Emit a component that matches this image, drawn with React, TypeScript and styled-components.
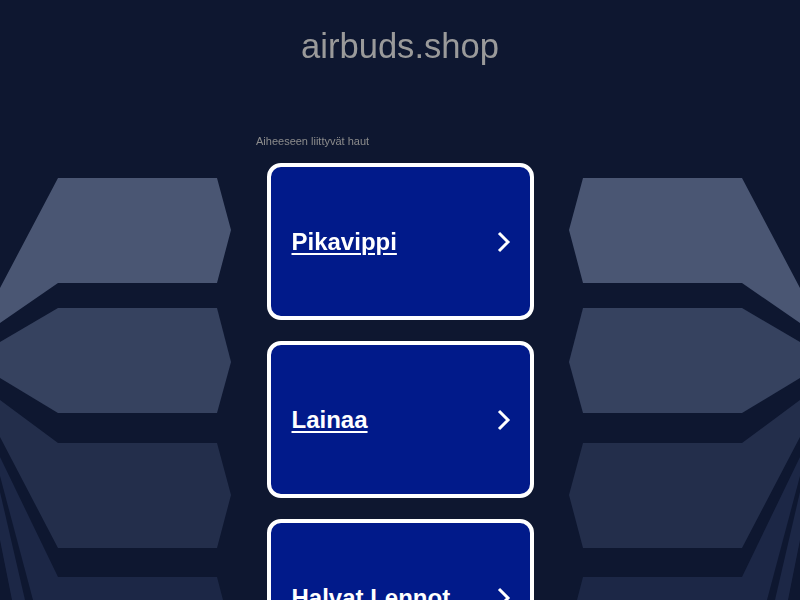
import React from 'react';
import styled, { createGlobalStyle } from 'styled-components';

const GlobalStyle = createGlobalStyle`
  html, body {
    margin: 0;
    padding: 0;
    background: #0e1730;
    font-family: Arial, "Liberation Sans", sans-serif;
    overflow: hidden;
  }
`;

const Backdrop = styled.svg`
  position: fixed;
  top: 0;
  left: 0;
  width: 800px;
  height: 600px;
  z-index: 0;
`;

const Page = styled.div`
  position: relative;
  z-index: 1;
  display: flex;
  flex-direction: column;
  align-items: center;
  min-height: 600px;
`;

const Domain = styled.h1`
  margin: 26px 0 0;
  font-size: 34.6px;
  font-weight: normal;
  color: #9a9a9a;
  line-height: 40px;
`;

const Related = styled.div`
  width: 288px;
  margin-top: 69px;
`;

const Caption = styled.div`
  font-size: 11px;
  color: #8c8c8c;
  line-height: 13px;
  margin-bottom: 15px;
`;

const List = styled.div`
  display: flex;
  flex-direction: column;
  align-items: center;
  gap: 21px;
`;

const Card = styled.a`
  box-sizing: border-box;
  width: 267px;
  height: 157px;
  border: 4px solid #ffffff;
  border-radius: 14px;
  background: #011a8a;
  display: flex;
  align-items: center;
  justify-content: space-between;
  padding: 0 18px 0 21px;
  color: #ffffff;
  text-decoration: none;
`;

const Label = styled.span`
  font-size: 24px;
  font-weight: bold;
  text-decoration: underline;
  text-decoration-thickness: 2px;
  text-underline-offset: 3px;
`;

const Chevron = () => (
  <svg width="16" height="22" viewBox="0 0 16 22">
    <path d="M3 2 L12 11 L3 20" fill="none" stroke="#fff" strokeWidth="3" />
  </svg>
);

const Side = ({ mirror }: { mirror?: boolean }) => (
  <g transform={mirror ? 'translate(800,0) scale(-1,1)' : undefined}>
    <polygon fill="#4a5673" points="58,178 217,178 231,230 217,283 58,283 0,323 0,288" />
    <polygon fill="#36425f" points="58,308 217,308 231,362 217,413 58,413 0,378 0,342" />
    <polygon fill="#232e4b" points="58,443 217,443 231,495 217,548 58,548 0,437 0,400" />
    <polygon fill="#1c2746" points="58,577 217,577 223,600 0,600 0,457" />
    <polygon fill="#0e1730" points="0,476 33,600 25,600 0,492" />
    <polygon fill="#0e1730" points="0,540 12,600 0,600" />
  </g>
);

const items = ['Pikavippi', 'Lainaa', 'Halvat Lennot'];

export default function App() {
  return (
    <>
      <GlobalStyle />
      <Backdrop viewBox="0 0 800 600">
        <rect width="800" height="600" fill="#0e1730" />
        <Side />
        <Side mirror />
      </Backdrop>
      <Page>
        <Domain>airbuds.shop</Domain>
        <Related>
          <Caption>Aiheeseen liittyvät haut</Caption>
          <List>
            {items.map((item) => (
              <Card key={item} href="#">
                <Label>{item}</Label>
                <Chevron />
              </Card>
            ))}
          </List>
        </Related>
      </Page>
    </>
  );
}
